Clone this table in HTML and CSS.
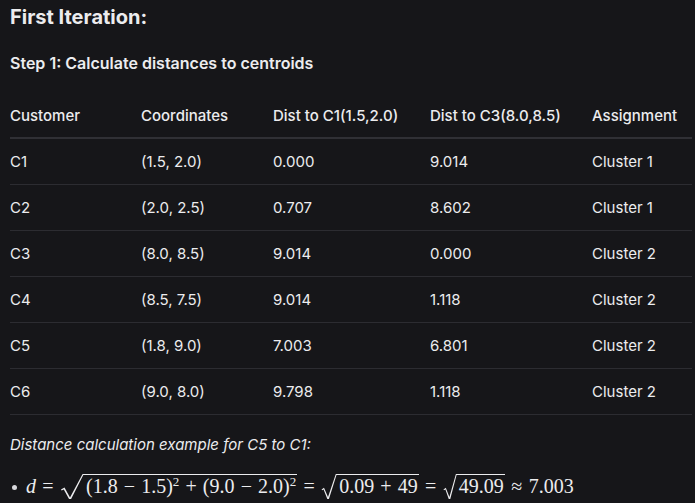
FILE: index.html
```html
<!DOCTYPE html>
<html>
<head>
<meta charset="utf-8">
<link rel="stylesheet" href="styles.css">
</head>
<body>
<div class="page">
  <h3 class="title">First Iteration:</h3>
  <h4 class="step">Step 1: Calculate distances to centroids</h4>
  <table class="grid">
    <thead>
      <tr><th class="c1">Customer</th><th class="c2">Coordinates</th><th class="c3">Dist to C1(1.5,2.0)</th><th class="c4">Dist to C3(8.0,8.5)</th><th class="c5">Assignment</th></tr>
    </thead>
    <tbody>
      <tr><td>C1</td><td>(1.5, 2.0)</td><td>0.000</td><td>9.014</td><td>Cluster 1</td></tr>
      <tr><td>C2</td><td>(2.0, 2.5)</td><td>0.707</td><td>8.602</td><td>Cluster 1</td></tr>
      <tr><td>C3</td><td>(8.0, 8.5)</td><td>9.014</td><td>0.000</td><td>Cluster 2</td></tr>
      <tr><td>C4</td><td>(8.5, 7.5)</td><td>9.014</td><td>1.118</td><td>Cluster 2</td></tr>
      <tr><td>C5</td><td>(1.8, 9.0)</td><td>7.003</td><td>6.801</td><td>Cluster 2</td></tr>
      <tr><td>C6</td><td>(9.0, 8.0)</td><td>9.798</td><td>1.118</td><td>Cluster 2</td></tr>
    </tbody>
  </table>
  <p class="note">Distance calculation example for C5 to C1:</p>
  <ul class="list">
    <li class="math"><span class="v">d</span><span class="op">=</span><span class="sqrt wide"><svg class="rad" viewBox="0 0 24 26" preserveAspectRatio="none"><polygon points="1,15.5 4.5,13.6 10,23.4 22.6,0 24,0 24,1 23.3,1 10.6,26 9.6,26 3.8,15.6 1.6,16.4" fill="#ececee"/></svg><span class="under">(1.8<span class="bin">−</span>1.5)<sup>2</sup><span class="bin">+</span>(9.0<span class="bin">−</span>2.0)<sup>2</sup></span></span><span class="op">=</span><span class="sqrt mid"><svg class="rad" viewBox="0 0 16 26" preserveAspectRatio="none"><polygon points="0.6,15.5 3,13.8 7,23 14.8,0 16,0 16,1 15.5,1 7.6,26 6.7,26 2.6,15.6 1.1,16.3" fill="#ececee"/></svg><span class="under">0.09<span class="bin">+</span>49</span></span><span class="op">=</span><span class="sqrt narrow"><svg class="rad" viewBox="0 0 14 26" preserveAspectRatio="none"><polygon points="0.5,15.5 2.8,13.8 6.4,23 12.9,0 14,0 14,1 13.6,1 7,26 6.1,26 2.4,15.6 1,16.3" fill="#ececee"/></svg><span class="under">49.09</span></span><span class="op">≈</span>7.003</li>
  </ul>
</div>
</body>
</html>
```
FILE: styles.css
```css
html, body {
  margin: 0;
  padding: 0;
  background: #161619;
}
.page {
  padding: 0 3px 0 10px;
  font-family: Inter, "Noto Sans", sans-serif;
  color: #ececee;
}
.title {
  margin: 0;
  padding-top: 4px;
  font-size: 20px;
  line-height: 26px;
  font-weight: 700;
}
.step {
  margin: 0;
  padding-top: 23px;
  font-size: 16px;
  line-height: 20px;
  font-weight: 600;
}
.grid {
  width: 100%;
  border-collapse: collapse;
  margin-top: 20px;
  font-size: 15px;
}
.grid th, .grid td {
  text-align: left;
  padding: 0;
  height: 45px;
  vertical-align: middle;
}
.grid th {
  font-weight: 500;
  height: 44px;
  border-bottom: 2px solid #303035;
}
.grid td {
  font-weight: 400;
  border-bottom: 1px solid #2c2c31;
}
.c1 { width: 131px; }
.c2 { width: 132px; }
.c3 { width: 157px; }
.c4 { width: 162px; }
.note {
  margin: 19px 0 0;
  font-style: italic;
  font-size: 15px;
  line-height: 22px;
}
.list {
  margin: 17px 0 0;
  padding: 0 0 0 16px;
  list-style: none;
  position: relative;
}
.list li::before {
  content: "";
  position: absolute;
  left: 2px;
  top: 12px;
  width: 5px;
  height: 5px;
  border-radius: 50%;
  background: #d8d8dc;
}
.math {
  font-family: "Liberation Serif", "Times New Roman", serif;
  font-size: 20px;
  line-height: 26px;
  white-space: nowrap;
}
.v { font-style: italic; margin-right: 0; }
.op {
  display: inline-block;
  width: 14px;
  text-align: center;
  margin: 0 5px;
}
.bin {
  display: inline-block;
  width: 14px;
  text-align: center;
  margin: 0 4.75px;
}
.sqrt {
  display: inline-block;
  position: relative;
  line-height: 22px;
}
.sqrt.wide { padding-left: 24px; }
.sqrt.mid { padding-left: 16px; }
.sqrt.narrow { padding-left: 14px; }
.rad {
  position: absolute;
  left: 0;
  top: 0;
  height: 26px;
}
.wide .rad { width: 24px; }
.mid .rad { width: 16px; }
.narrow .rad { width: 14px; }
.under {
  display: inline-block;
  border-top: 1px solid #ececee;
  line-height: 22px;
  padding-left: 2px;
  padding-right: 1px;
}
sup { font-size: 13px; line-height: 0; vertical-align: 7px; }
```
